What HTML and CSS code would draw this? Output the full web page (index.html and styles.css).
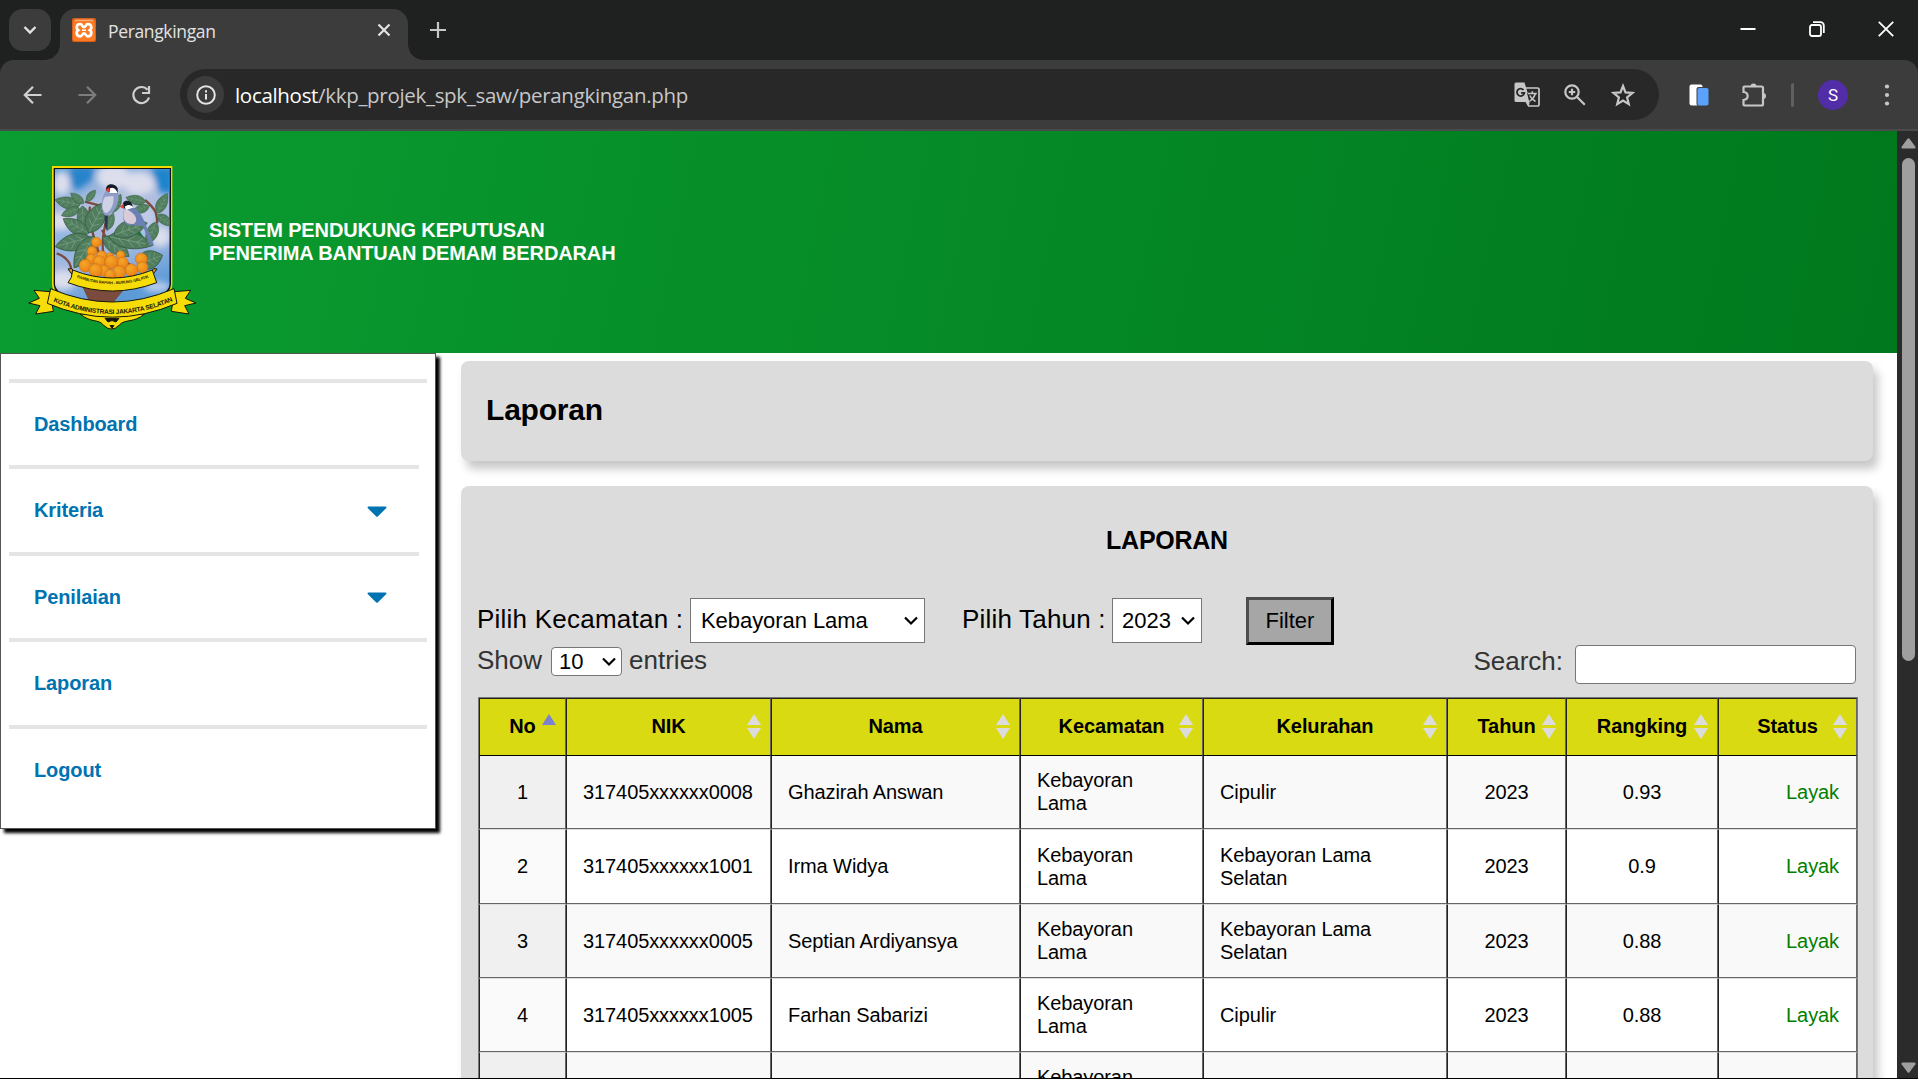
FILE: index.html
```html
<!DOCTYPE html>
<html lang="id">
<head>
<meta charset="utf-8">
<title>Perangkingan</title>
<link rel="stylesheet" href="styles.css">
</head>
<body>
<div class="browser">
  <header class="tabstrip">
    <button class="tab-search" aria-label="Cari tab"><svg width="14" height="10" viewBox="0 0 14 10"><path d="M1.500 2l5.500 5.500L12.500 2" fill="none" stroke="#e3e3e3" stroke-width="2.400"/></svg></button>
    <div class="tab">
      <svg class="favicon" width="24" height="24" viewBox="0 0 24 24"><rect width="24" height="24" rx="2" fill="#d8601a"/><rect x="1" y="2" width="22" height="21" rx="2" fill="#fb7a24"/><path d="M3 2.200h18" stroke="#fbc7a0" stroke-width="1"/><path d="M8.200 6.200C4.200 6.200 3.800 10.500 6.200 12.200 3.800 14 4.200 18.300 8.200 18.300 10.500 18.300 10.200 15.300 12 15.300S13.500 18.300 15.800 18.300C19.800 18.300 20.200 14 17.800 12.200 20.200 10.500 19.800 6.200 15.800 6.200 13.500 6.200 13.800 9.200 12 9.200S10.500 6.200 8.200 6.200z" fill="none" stroke="#fff" stroke-width="2.700"/><path d="M10 12.200h4" stroke="#fff" stroke-width="1.600"/></svg>
      <span class="tab-title">Perangkingan</span>
      <svg class="tab-close" width="14" height="14" viewBox="0 0 14 14"><path d="M1.500 1.500l11 11M12.500 1.500l-11 11" stroke="#e3e3e3" stroke-width="2.200"/></svg>
    </div>
    <svg class="new-tab" width="16" height="16" viewBox="0 0 16 16"><path d="M8 0v16M0 8h16" stroke="#c7c7c7" stroke-width="2.200"/></svg>
    <div class="window-buttons">
      <svg width="16" height="16" viewBox="0 0 16 16"><path d="M.5 8h15" stroke="#fff" stroke-width="2"/></svg>
      <svg width="16" height="16" viewBox="0 0 16 16"><rect x="1" y="4" width="11" height="11" rx="2" fill="none" stroke="#fff" stroke-width="1.800"/><path d="M4 1.200h7.500a3.300 3.300 0 0 1 3.300 3.300V12" fill="none" stroke="#fff" stroke-width="1.800"/></svg>
      <svg width="16" height="16" viewBox="0 0 16 16"><path d="M.8.8l14.400 14.400M15.200.8L.8 15.200" stroke="#fff" stroke-width="1.800"/></svg>
    </div>
  </header>

  <div class="toolbar">
    <svg class="nav-back" width="20" height="20" viewBox="0 0 20 20"><path d="M18.500 10H2.500M10 1.800L1.800 10l8.200 8.200" fill="none" stroke="#d0d0d0" stroke-width="2.200"/></svg>
    <svg class="nav-forward" width="20" height="20" viewBox="0 0 20 20"><path d="M1.500 10h16M10 1.800l8.200 8.200-8.200 8.200" fill="none" stroke="#7d7d7d" stroke-width="2.200"/></svg>
    <svg class="nav-reload" width="20" height="20" viewBox="0 0 20 20"><path d="M16.500 4.800A8 8 0 1 0 18 12.500" fill="none" stroke="#d0d0d0" stroke-width="2.200"/><path d="M18 1v7h-7" fill="none" stroke="#d0d0d0" stroke-width="2.200"/></svg>
    <div class="omnibox">
      <span class="site-info"><svg width="20" height="20" viewBox="0 0 20 20"><circle cx="10" cy="10" r="8.800" fill="none" stroke="#e3e3e3" stroke-width="2"/><path d="M10 9v5.500M10 5.300v2.200" stroke="#e3e3e3" stroke-width="2"/></svg></span>
      <span class="url"><b>localhost</b>/kkp_projek_spk_saw/perangkingan.php</span>
      <svg class="ob-translate" width="26" height="26" viewBox="0 0 26 26"><path d="M12 6h11.500a1.500 1.500 0 0 1 1.500 1.500v15a1.500 1.500 0 0 1-1.500 1.500H14" fill="none" stroke="#c7c7c7" stroke-width="1.700"/><path d="M2 .5h8.500l6 19.500-2.500 4.500L11.500 20H2a1.500 1.500 0 0 1-1.500-1.500V2A1.500 1.500 0 0 1 2 .5z" fill="#c7c7c7"/><path d="M9.500 8A3.700 3.700 0 1 0 10.300 10.800H7" fill="none" stroke="#282828" stroke-width="1.800"/><path d="M13 11h10l1 11-8 1z" fill="#282828"/><path d="M13.800 11.500h9M18.300 9.300v2.200M21.300 11.500c-.8 3.500-3 6-6 8M15.800 13.500c1 2.500 3 4.500 5.700 6" fill="none" stroke="#c7c7c7" stroke-width="1.500"/></svg>
      <svg class="ob-zoom" width="22" height="22" viewBox="0 0 22 22"><circle cx="8" cy="8" r="6.700" fill="none" stroke="#c7c7c7" stroke-width="2.200"/><path d="M12.800 12.800l8 8M8 4.800v6.400M4.800 8h6.400" stroke="#c7c7c7" stroke-width="2.200"/></svg>
      <svg class="ob-star" width="24" height="24" viewBox="0 0 24 24"><path d="M12 3l2.500 6.400 6.900.5-5.300 4.500 1.700 6.700-5.800-3.600-5.800 3.600 1.700-6.700L2.600 9.900l6.900-.5z" fill="none" stroke="#c7c7c7" stroke-width="2.200"/></svg>
    </div>
    <svg class="ext" width="20" height="22" viewBox="0 0 20 22"><rect x=".5" y=".5" width="13" height="21" rx="2" fill="#fff"/><rect x="7.500" y="3" width="12" height="19" rx="2" fill="#3b4148"/><rect x="8.500" y="4" width="11" height="17.500" rx="1.800" fill="#5aa2fb"/></svg>
    <svg class="puzzle" width="26" height="26" viewBox="0 0 26 26"><path d="M3.500 4.500h17a1.500 1.500 0 0 1 1.500 1.500v16a1.500 1.500 0 0 1-1.500 1.500h-17a1 1 0 0 1-1-1V18c5.500-.5 5.500-7.500 0-8V5.500a1 1 0 0 1 1-1z" fill="none" stroke="#c7c7c7" stroke-width="2.200"/><path d="M9.500 4.500a3 3 0 0 1 6 0zM22 11a3 3 0 0 1 0 6z" fill="#c7c7c7"/></svg>
    <span class="divider"></span>
    <span class="avatar">S</span>
    <svg class="kebab" width="6" height="22" viewBox="0 0 6 22"><g fill="#c7c7c7"><circle cx="3" cy="2.500" r="2.100"/><circle cx="3" cy="11" r="2.100"/><circle cx="3" cy="19.500" r="2.100"/></g></svg>
  </div>

  <div class="viewport">
    <div class="page">
      <div class="banner">
        <svg class="emblem" width="200" height="190" viewBox="0 0 600 570">
          <defs>
            <linearGradient id="sky" x1="0" y1="0" x2="0.300" y2="1"><stop offset="0" stop-color="#5f9fd6"/><stop offset=".35" stop-color="#b3bfdf"/><stop offset=".7" stop-color="#a3b8e0"/><stop offset="1" stop-color="#5d9bd8"/></linearGradient>
            <radialGradient id="fruit" cx=".4" cy=".35" r=".75"><stop offset="0" stop-color="#f3a828"/><stop offset="1" stop-color="#ea7a14"/></radialGradient>
            <filter id="cloud"><feGaussianBlur stdDeviation="9"/></filter>
            <clipPath id="shield"><path d="M135 57H479V400C479 437 415 456 307 462C200 456 135 437 135 400Z"/></clipPath>
            <path id="ribbonText" d="M126 453Q307 531 488 453"/>
            <path id="mottoText" d="M198 382Q307 423 418 382"/>
            <g id="leaf"><path d="M0 0C18-32 62-34 98 0C62 28 22 28 0 0Z" fill="#4f7d5e" stroke="#36593f" stroke-width="2"/><path d="M3 0H92M22 0l14-16M22 0l14 14M42 0l15-17M42 0l15 15M62 0l12-13M62 0l12 11" fill="none" stroke="#86a98c" stroke-width="1.500"/></g>
          </defs>
          <path d="M126 48H487V402C487 450 410 466 307 472C200 466 126 450 126 402Z" fill="#f5d800"/>
          <path d="M131 54H483V401C483 444 410 460 307 467C200 460 131 444 131 401Z" fill="#111"/>
          <g clip-path="url(#shield)">
            <rect x="130" y="50" width="356" height="420" fill="url(#sky)"/>
            <g filter="url(#cloud)" fill="#dcdeec">
              <path d="M185 50h70l-10 40-40 30-40-20z" fill="#2583ca"/><path d="M420 50h70v80h-40z" fill="#1c84cc"/><path d="M130 230h60v100h-60z" fill="#93b6e2"/>
              <ellipse cx="310" cy="80" rx="50" ry="38"/><ellipse cx="385" cy="100" rx="48" ry="34"/><ellipse cx="155" cy="100" rx="26" ry="35"/><ellipse cx="350" cy="200" rx="90" ry="50" fill="#bfcae8"/><ellipse cx="150" cy="215" rx="40" ry="25"/><ellipse cx="450" cy="260" rx="30" ry="30"/><ellipse cx="160" cy="390" rx="40" ry="30"/><ellipse cx="440" cy="410" rx="40" ry="16" fill="#b8ccec"/>
            </g>
            <path d="M212 400L255 418H310L356 402L300 470H245Z" fill="#7b4b3e"/>
            <g fill="none" stroke="#7b4b3e"><path d="M270 330C265 280 230 230 240 170M225 155L300 175M280 310C270 250 300 190 300 150M370 350C330 330 300 290 276 240M405 150C440 180 440 190 442 220M140 310C170 320 185 340 185 370" stroke-width="7"/></g>
            <path d="M365 265l22-24 20 30-20 10z" fill="#087e3b"/>
            <use href="#leaf" transform="translate(210 165) rotate(-168) scale(.78)"/>
            <use href="#leaf" transform="translate(222 160) rotate(218) scale(.52)"/>
            <use href="#leaf" transform="translate(230 155) rotate(-52) scale(.45)"/>
            <use href="#leaf" transform="translate(208 174) rotate(157) scale(.6)"/>
            <use href="#leaf" transform="translate(217 168) rotate(88) scale(.8)"/>
            <use href="#leaf" transform="translate(236 248) rotate(-62) scale(1.050 1.200)"/>
            <use href="#leaf" transform="translate(236 250) rotate(210) scale(.9)"/>
            <use href="#leaf" transform="translate(240 262) rotate(165) scale(1.100)"/>
            <use href="#leaf" transform="translate(252 258) rotate(122) scale(1.150)"/>
            <use href="#leaf" transform="translate(278 262) rotate(36) scale(1)"/>
            <use href="#leaf" transform="translate(296 260) rotate(11) scale(1.380 1.100)"/>
            <use href="#leaf" transform="translate(312 255) rotate(-20) scale(1.080)"/>
            <use href="#leaf" transform="translate(292 240) rotate(-70) scale(.55)"/>
            <use href="#leaf" transform="translate(307 188) rotate(-65) scale(.62)"/>
            <use href="#leaf" transform="translate(407 155) rotate(192) scale(.62)"/>
            <use href="#leaf" transform="translate(418 168) rotate(162) scale(.55)"/>
            <use href="#leaf" transform="translate(442 190) rotate(-63) scale(.68)"/>
            <use href="#leaf" transform="translate(440 195) rotate(34) scale(.6)"/>
            <use href="#leaf" transform="translate(438 216) rotate(112) scale(.75)"/>
            <use href="#leaf" transform="translate(385 345) rotate(-22) scale(.8 1.200)"/>
            <path d="M284 185L293 198L292 245L284 225Z" fill="#293652"/>
            <path d="M288 122C270 145 272 190 288 197C308 195 329 165 325 131Z" fill="#8f9dc9"/>
            <path d="M285 140C273 160 275 183 289 190C305 180 313 158 310 138Z" fill="#cfd1e4"/>
            <path d="M288 121C285 98 315 97 323 115V130L300 128Z" fill="#151b25"/><path d="M300 115C310 108 320 120 323 129L298 129Z" fill="#fff"/><path d="M298 112L286 120L298 127Z" fill="#e93a30"/>
            <path d="M345 172C365 163 390 180 403 214L432 286L420 285L399 228L350 224C335 210 338 190 345 172Z" fill="#6b80b5"/>
            <path d="M344 178C333 205 345 225 371 222C390 210 370 182 344 178Z" fill="#dbcad8"/>
            <path d="M341 175C331 153 352 146 364 158L370 172Z" fill="#151b25"/><path d="M344 170C356 160 364 166 372 172L349 180Z" fill="#fff"/><path d="M341 161L329 170L342 177Z" fill="#e93a30"/>
            <g fill="url(#fruit)" stroke="#c96a12" stroke-width="1.500"><circle cx="259" cy="277" r="15"/><circle cx="246" cy="304" r="15"/><circle cx="275" cy="318" r="16"/><circle cx="332" cy="315" r="13"/><circle cx="300" cy="318" r="10"/><circle cx="243" cy="327" r="15"/><circle cx="394" cy="327" r="18"/><circle cx="268" cy="335" r="18"/><circle cx="338" cy="338" r="17"/><circle cx="304" cy="336" r="20"/><circle cx="226" cy="347" r="19"/><circle cx="397" cy="352" r="17"/><circle cx="281" cy="362" r="17"/><circle cx="364" cy="360" r="19"/><circle cx="257" cy="361" r="20"/><circle cx="327" cy="367" r="20"/><circle cx="300" cy="374" r="16"/></g>
          </g>
          <g fill="#f7dd08" stroke="#16180c" stroke-width="3">
            <path d="M174 357L185 356L191 364L187 374ZM441 357L431 356L424 364L428 374Z" fill="#ef9c20"/>
            <path d="M188 360Q307 408 427 360L440 398Q307 448 174 398L184 382Z"/>
            <path d="M120 425L72 421L88 445L56 459L90 467L77 492L130 484ZM493 425L542 421L526 445L558 459L524 467L537 492L484 484Z"/>
            <path d="M210 492C245 520 265 506 280 525Q305 550 328 525C345 506 370 520 404 492Z"/>
            <path d="M285 505L327 505L318 516Q306 507 294 516Z" fill="#111"/><path d="M300 525L306 536L312 525" fill="#111"/>
            <path d="M122 416Q307 496 492 416L501 460Q307 543 112 460Z"/>
          </g>
          <text class="emblem-name"><textPath href="#ribbonText" startOffset="1%" textLength="370">KOTA ADMINISTRASI JAKARTA SELATAN</textPath></text>
          <text class="emblem-motto"><textPath href="#mottoText" startOffset="1%" textLength="222">RAMBUTAN RAPIAH - BURUNG GELATIK</textPath></text>
        </svg>
        <h1 class="banner-title">SISTEM PENDUKUNG KEPUTUSAN<br>PENERIMA BANTUAN DEMAM BERDARAH</h1>
      </div>

      <div class="columns">
        <nav class="sidebar">
          <a class="item">Dashboard</a>
          <a class="item short">Kriteria<svg width="20" height="12" viewBox="0 0 20 12"><path d="M1.500.5h17c1 0 1.300 1 .6 1.700L11 10.300q-1 1-2 0L.9 2.200C.2 1.500.5.5 1.500.5z" fill="#0073b1"/></svg></a>
          <a class="item short">Penilaian<svg width="20" height="12" viewBox="0 0 20 12"><path d="M1.500.5h17c1 0 1.300 1 .6 1.700L11 10.300q-1 1-2 0L.9 2.200C.2 1.500.5.5 1.500.5z" fill="#0073b1"/></svg></a>
          <a class="item">Laporan</a>
          <a class="item">Logout</a>
        </nav>

        <main class="content">
          <section class="card heading"><h2>Laporan</h2></section>
          <section class="card report">
            <h3>LAPORAN</h3>
            <div class="filters">
              <label class="lbl-kecamatan">Pilih Kecamatan :</label>
              <span class="select sel-kecamatan">Kebayoran Lama<svg width="14" height="10" viewBox="0 0 14 10"><path d="M1 1.500l6 6 6-6" fill="none" stroke="#000" stroke-width="2.200"/></svg></span>
              <label class="lbl-tahun">Pilih Tahun :</label>
              <span class="select sel-tahun">2023<svg width="14" height="10" viewBox="0 0 14 10"><path d="M1 1.500l6 6 6-6" fill="none" stroke="#000" stroke-width="2.200"/></svg></span>
              <button class="btn-filter">Filter</button>
            </div>
            <div class="controls">
              <div class="length"><span>Show</span><span class="select sel-length">10<svg width="14" height="10" viewBox="0 0 14 10"><path d="M1 1.500l6 6 6-6" fill="none" stroke="#000" stroke-width="2.200"/></svg></span><span>entries</span></div>
              <div class="search"><span>Search:</span><input type="text" aria-label="Search"></div>
            </div>
            <table class="ranking">
              <colgroup><col class="c-no"><col class="c-nik"><col class="c-nama"><col class="c-kec"><col class="c-kel"><col class="c-tahun"><col class="c-rank"><col class="c-status"></colgroup>
              <thead>
                <tr><th class="asc">No</th><th>NIK</th><th>Nama</th><th>Kecamatan</th><th>Kelurahan</th><th>Tahun</th><th>Rangking</th><th>Status</th></tr>
              </thead>
              <tbody>
                <tr><td>1</td><td>317405xxxxxx0008</td><td>Ghazirah Answan</td><td>Kebayoran Lama</td><td>Cipulir</td><td>2023</td><td>0.93</td><td>Layak</td></tr>
                <tr class="tall"><td>2</td><td>317405xxxxxx1001</td><td>Irma Widya</td><td>Kebayoran Lama</td><td>Kebayoran Lama Selatan</td><td>2023</td><td>0.9</td><td>Layak</td></tr>
                <tr><td>3</td><td>317405xxxxxx0005</td><td>Septian Ardiyansya</td><td>Kebayoran Lama</td><td>Kebayoran Lama Selatan</td><td>2023</td><td>0.88</td><td>Layak</td></tr>
                <tr><td>4</td><td>317405xxxxxx1005</td><td>Farhan Sabarizi</td><td>Kebayoran Lama</td><td>Cipulir</td><td>2023</td><td>0.88</td><td>Layak</td></tr>
                <tr><td></td><td></td><td></td><td>Kebayoran<br>&nbsp;</td><td></td><td></td><td></td><td></td></tr>
              </tbody>
            </table>
          </section>
        </main>
      </div>
    </div>
    <div class="scrollbar">
      <svg width="15" height="11" viewBox="0 0 15 11"><path d="M6.500.8q1-1.200 2 0L14.400 8.800q.6 1.700-1 1.700H1.600q-1.600 0-1-1.700z" fill="#9f9f9f"/></svg>
      <span class="thumb"></span>
      <svg class="down" width="15" height="11" viewBox="0 0 15 11"><path d="M6.500 10.200q1 1.200 2 0L14.400 2.200q.6-1.700-1-1.700H1.600q-1.600 0-1 1.700z" fill="#9f9f9f"/></svg>
    </div>
  </div>
</div>
</body>
</html>
```
FILE: styles.css
```css
* { box-sizing: border-box; }

body {
  margin: 0;
  overflow: hidden;
  font-family: "Liberation Sans", Arial, sans-serif;
  background: #fff;
}

svg { display: block; flex: none; }

.browser {
  display: flex;
  flex-direction: column;
  width: 1918px;
  height: 1079px;
  overflow: hidden;
  background: #1f2120;
  border-bottom: 1px solid #000;
}

/* Tab strip */
.tabstrip {
  flex: none;
  display: flex;
  align-items: flex-start;
  height: 60px;
  padding: 9px 0 0 9px;
}

.tab-search {
  display: flex;
  align-items: center;
  justify-content: center;
  width: 42px;
  height: 42px;
  padding: 0;
  border: 0;
  border-radius: 14px;
  background: #3c3c3c;
}

.tab {
  position: relative;
  display: flex;
  align-items: center;
  width: 348px;
  height: 51px;
  margin-left: 9px;
  padding: 0 17px 9px 12px;
  border-radius: 15px 15px 0 0;
  background: #3c3c3c;
}

.tab::before,
.tab::after {
  content: "";
  position: absolute;
  bottom: 0;
  width: 15px;
  height: 15px;
}
.tab::before { left: -15px; background: radial-gradient(circle at 0 0, transparent 14.500px, #3c3c3c 15px); }
.tab::after { right: -15px; background: radial-gradient(circle at 100% 0, transparent 14.500px, #3c3c3c 15px); }

.tab-title {
  flex: 1;
  margin-left: 12px;
  font: 17.500px/24px "Open Sans", "Noto Sans", sans-serif;
  letter-spacing: -0.350px;
  color: #e3e3e3;
  padding-top: 2px;
}

.new-tab { margin: 13px 0 0 22px; }

.window-buttons {
  display: flex;
  gap: 53px;
  margin: 12px 24px 0 auto;
}

/* Toolbar */
.toolbar {
  flex: none;
  display: flex;
  align-items: center;
  height: 71px;
  padding: 0 28px 0 23px;
  border-bottom: 2px solid #4a4a4a;
  border-radius: 14px 14px 0 0;
  background: #3c3c3c;
}

.nav-forward { margin-left: 34px; }
.nav-reload { margin-left: 34px; }

.omnibox {
  display: flex;
  align-items: center;
  width: 1479px;
  height: 51px;
  margin-left: 29px;
  padding: 0 24px 0 7px;
  border-radius: 26px;
  background: #282828;
}

.site-info {
  display: flex;
  align-items: center;
  justify-content: center;
  width: 37px;
  height: 37px;
  border-radius: 50%;
  background: #3c3c3c;
}

.url {
  flex: 1;
  margin-left: 11px;
  font: 20.500px/30px "Open Sans", "Noto Sans", sans-serif;
  letter-spacing: -0.310px;
  color: #c7c7c7;
}
.url b { font-weight: 400; color: #fff; }

.ob-zoom { margin-left: 24px; }
.ob-star { margin-left: 25px; }
.ext { margin-left: 30px; }
.puzzle { margin-left: 32px; }

.divider {
  width: 3px;
  height: 24px;
  margin-left: 24px;
  border-radius: 2px;
  background: #606060;
}

.avatar {
  width: 30px;
  height: 30px;
  margin-left: 24px;
  border-radius: 50%;
  background: #512da8;
  color: #fff;
  font: 17px/31px Roboto, sans-serif;
  text-align: center;
}
.kebab { margin-left: auto; }

/* Page area */
.viewport {
  flex: 1;
  display: flex;
  min-height: 0;
}

.page {
  width: 1897px;
  overflow: hidden;
  background: #fff;
}

.banner {
  display: flex;
  height: 222px;
  padding: 19px 0 0 10px;
  background: linear-gradient(102deg, #0a9d31, #00781d);
}

.banner-title {
  margin: 69px 0 0 -1px;
  font-size: 20px;
  line-height: 23px;
  color: #fff;
  letter-spacing: -0.125px;
}

.emblem-name { font: bold 19.500px "Liberation Sans", Arial, sans-serif; fill: #15170b; }
.emblem-motto { font: bold 12px "Liberation Sans", Arial, sans-serif; fill: #2f2a08; }

.columns {
  display: flex;
  align-items: flex-start;
}

/* Sidebar */
.sidebar {
  width: 436px;
  height: 476px;
  padding: 24.900px 8px 0;
  border: 1px solid #555;
  background: #fff;
  box-shadow: 4px 4px 3px #000;
}

.item {
  display: flex;
  align-items: center;
  justify-content: space-between;
  height: 86.500px;
  padding: 0 32px 0 25px;
  border-top: 4px solid #e5e5e5;
  font-size: 20px;
  font-weight: 700;
  letter-spacing: -0.120px;
  color: #0073b1;
}
.item.short { margin-right: 8px; }
.item svg { margin-top: 2px; }

/* Content */
.content {
  width: 1412px;
  margin: 8px 0 0 25px;
}

.card {
  border-radius: 8px;
  background: #dcdcdc;
  box-shadow: 5px 8px 10px rgba(0, 0, 0, .22);
}

.heading {
  height: 100px;
  padding: 32px 25px;
}
.heading h2 {
  margin: 0;
  font-size: 30px;
  line-height: 34px;
  letter-spacing: -0.200px;
}

.report {
  height: 700px;
  margin-top: 25px;
  padding: 39px 15px 0 17px;
}
.report h3 {
  margin: 0;
  padding-right: 2px;
  font-size: 25px;
  line-height: 30px;
  letter-spacing: -0.250px;
  text-align: center;
}

.filters {
  display: flex;
  align-items: center;
  height: 48px;
  margin-top: 42px;
  font-size: 26px;
}
.filters label { padding-bottom: 3px; }
.lbl-kecamatan { width: 213px; margin-left: -1px; letter-spacing: .230px; }
.lbl-tahun { width: 150px; margin-left: 37px; letter-spacing: .200px; }

.select {
  display: flex;
  align-items: center;
  justify-content: space-between;
  border: 1px solid #767676;
  background: #fff;
  color: #000;
  font-size: 22px;
}
.sel-kecamatan { width: 235px; height: 45px; padding: 0 6px 0 10px; margin-bottom: 1px; letter-spacing: -0.060px; }
.sel-tahun { width: 90px; height: 45px; padding: 0 6px 0 9px; margin-bottom: 1px; }

.btn-filter {
  width: 88px;
  height: 48px;
  margin-left: 44px;
  padding: 0;
  border: 3px solid;
  border-color: #4d4d4d #000 #000 #4d4d4d;
  background: #a6a6a6;
  color: #000;
  font: 22px "Liberation Sans", Arial, sans-serif;
}

.controls {
  display: flex;
  justify-content: space-between;
  align-items: flex-start;
  height: 52px;
  font-size: 26px;
  line-height: 30px;
  color: #333;
}
.length { display: flex; margin-left: -1px; }
.sel-length {
  width: 71px;
  height: 29px;
  margin: 2px 7px 0 9px;
  padding: 0 5px 0 7px;
  border-radius: 4px;
}
.search { display: flex; padding-right: 2px; }
.search span { padding-top: 1px; }
.search input {
  width: 281px;
  height: 39px;
  margin-left: 12px;
  border: 1px solid #767676;
  border-radius: 4px;
  background: #fff;
}

/* Ranking table */
.ranking {
  width: 1380px;
  border: 1px solid #777;
  border-collapse: separate;
  border-spacing: 0;
  table-layout: fixed;
  font-size: 20px;
  line-height: 23px;
  letter-spacing: -0.090px;
  color: #000;
}
.c-no { width: 87px; }
.c-nik { width: 205px; }
.c-nama { width: 249px; }
.c-kec { width: 183px; }
.c-kel { width: 244px; }
.c-tahun { width: 119px; }
.c-rank { width: 152px; }
.c-status { width: 139px; }

.ranking th {
  position: relative;
  height: 58px;
  padding: 0 0 2px;
  border: solid #222;
  border-width: 1px;
  border-right-color: #666;
  border-bottom-color: #000;
  background: #d9da12;
}
.ranking th::before,
.ranking th::after {
  content: "";
  position: absolute;
  right: 9px;
  border: 7px solid transparent;
}
.ranking th::before { top: 15px; border-top: 0; border-bottom: 11px solid #dcdcdc; }
.ranking th::after { top: 29px; border-bottom: 0; border-top: 11px solid #dcdcdc; }
.ranking th.asc::before { border-bottom-color: #7b80d2; }
.ranking th.asc::after { display: none; }

.ranking td {
  height: 74px;
  padding: 0 16px;
  border-left: 1px solid #222;
  border-right: 1px solid #666;
  border-top: 1px solid #ddd;
  border-bottom: 1px solid #666;
  background: #fff;
  vertical-align: middle;
}
.ranking tr:first-child td { height: 73px; border-top: 0; }
.ranking tr.tall td { height: 75px; }
.ranking tr:nth-child(odd) td { background: #f9f9f9; }
.ranking tr:nth-child(even) td:first-child { background: #fafafa; }
.ranking tr:nth-child(odd) td:first-child { background: #f0f0f0; }
.ranking td:nth-child(1),
.ranking td:nth-child(6),
.ranking td:nth-child(7) { text-align: center; }
.ranking td:nth-child(2) { white-space: nowrap; }
.ranking td:nth-child(5) { padding-right: 60px; }
.ranking td:last-child { padding-right: 17px; text-align: right; color: green; }

/* Scrollbar */
.scrollbar {
  display: flex;
  flex-direction: column;
  align-items: center;
  width: 21px;
  padding: 7px 0 5px 2px;
  background: #2b2b2b;
}
.thumb {
  width: 13px;
  height: 503px;
  margin-top: 9px;
  border-radius: 7px;
  background: #9f9f9f;
}
.down { margin-top: auto; }
```
